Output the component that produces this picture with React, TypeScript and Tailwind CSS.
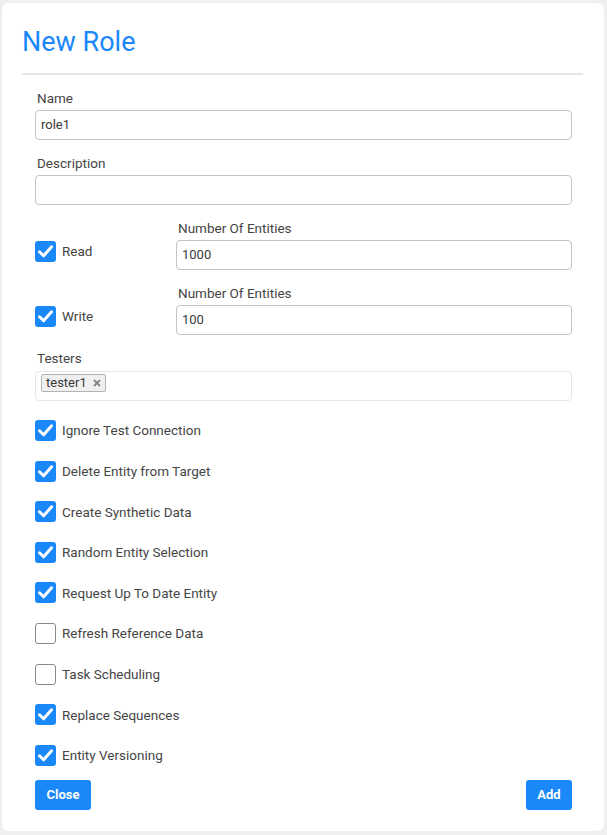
import React from "react";

const Check = ({ checked }: { checked: boolean }) =>
  checked ? (
    <span className="flex h-[21px] w-[21px] shrink-0 items-center justify-center rounded-[3px] bg-[#1a88f8]">
      <svg width="21" height="21" viewBox="0 0 21 21" fill="none">
        <path d="M4.5 10.8 L8.6 14.8 L16.6 5.8" stroke="#fff" strokeWidth="3" strokeLinecap="round" strokeLinejoin="round" />
      </svg>
    </span>
  ) : (
    <span className="block h-[21px] w-[21px] shrink-0 rounded-[3px] border border-[#8a8a8a] bg-white" />
  );

const Label = ({ children }: { children: React.ReactNode }) => (
  <div className="h-[20px] pl-[2px] text-[13.5px] leading-[20px] text-[#454545]">{children}</div>
);

const Input = ({ value }: { value: string }) => (
  <div className="mt-[2px] flex h-[30px] items-center rounded-[4px] border border-[#c4c4c4] bg-white px-[5px] text-[13px] text-[#3a3a3a]">
    {value}
  </div>
);

const items: [string, boolean][] = [
  ["Ignore Test Connection", true],
  ["Delete Entity from Target", true],
  ["Create Synthetic Data", true],
  ["Random Entity Selection", true],
  ["Request Up To Date Entity", true],
  ["Refresh Reference Data", false],
  ["Task Scheduling", false],
  ["Replace Sequences", true],
  ["Entity Versioning", true],
];

export default function App() {
  return (
    <div className="min-h-[835px] w-[607px] bg-[#efefef] pt-[3px] pl-[2px]" style={{ fontFamily: "Roboto, 'Noto Sans', sans-serif" }}>
      <div className="h-[828px] w-[602px] rounded-[6px] bg-white px-[20px]">
        <div className="pt-[22px] text-[27px] leading-[34px] text-[#1a88f8]">New Role</div>
        <div className="mt-[14px] h-[2px] w-[561px] bg-[#e6e6e6]" />
        <div className="pl-[13px] pr-[12px] pt-[13px]">
          <Label>Name</Label>
          <Input value="role1" />
          <div className="mt-[13px]" />
          <Label>Description</Label>
          <Input value="" />
          <div className="mt-[13px] flex">
            <div className="flex w-[141px] items-center gap-[6px] pt-[14px]">
              <Check checked />
              <span className="text-[13.5px] text-[#454545]">Read</span>
            </div>
            <div className="flex-1">
              <Label>Number Of Entities</Label>
              <Input value="1000" />
            </div>
          </div>
          <div className="mt-[13px] flex">
            <div className="flex w-[141px] items-center gap-[6px] pt-[14px]">
              <Check checked />
              <span className="text-[13.5px] text-[#454545]">Write</span>
            </div>
            <div className="flex-1">
              <Label>Number Of Entities</Label>
              <Input value="100" />
            </div>
          </div>
          <div className="mt-[13px]" />
          <Label>Testers</Label>
          <div className="mt-[3px] flex h-[30px] items-start rounded-[4px] border border-[#e6e6e6] bg-white px-[5px] pt-[2px]">
            <span className="flex h-[18px] items-center gap-[6px] rounded-[2px] border border-[#b4b4b4] bg-[#f0f0f0] px-[4px] text-[13px] text-[#3a3a3a]">
              tester1
              <svg width="8" height="8" viewBox="0 0 8 8">
                <path d="M1 1 L7 7 M7 1 L1 7" stroke="#888" strokeWidth="2" />
              </svg>
            </span>
          </div>
          <div className="mt-[19px] flex flex-col gap-[19.6px]">
            {items.map(([t, c]) => (
              <div key={t} className="flex h-[21px] items-center gap-[6px]">
                <Check checked={c} />
                <span className="text-[13.5px] text-[#454545]">{t}</span>
              </div>
            ))}
          </div>
          <div className="mt-[14px] flex justify-between">
            <button className="h-[30px] w-[56px] rounded-[3px] bg-[#1a88f8] text-[13px] font-bold text-white">Close</button>
            <button className="h-[30px] w-[46px] rounded-[3px] bg-[#1a88f8] text-[13px] font-bold text-white">Add</button>
          </div>
        </div>
      </div>
    </div>
  );
}
